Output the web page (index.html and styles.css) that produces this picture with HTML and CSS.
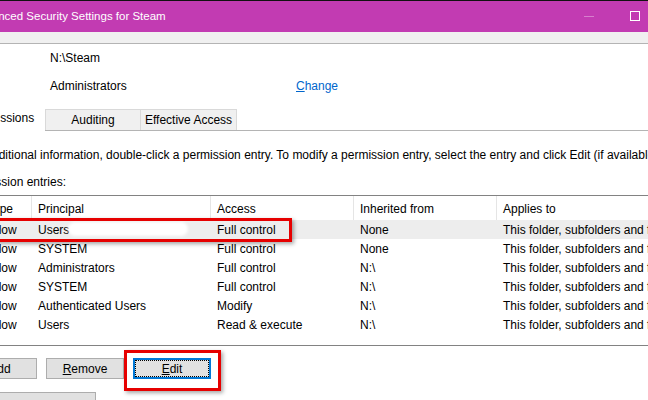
FILE: index.html
```html
<!DOCTYPE html>
<html>
<head>
<meta charset="utf-8">
<title>Advanced Security Settings for Steam</title>
<link rel="stylesheet" href="styles.css">
</head>
<body>
<div class="window">
  <div class="titlebar">
    <span class="title">Advanced Security Settings for Steam</span>
    <div class="controls">
      <span class="ctl"><span class="min-glyph"></span></span>
      <span class="ctl"><span class="max-glyph"></span></span>
      <span class="ctl">
        <svg class="close-glyph" width="10" height="10" viewBox="0 0 10 10"><path d="M0 0L10 10M10 0L0 10" stroke="#fff" stroke-width="1"/></svg>
      </span>
    </div>
  </div>
  <div class="band"></div>

  <div class="content">
    <div class="info">
      <span class="val">N:\Steam</span><span></span>
      <span class="val">Administrators</span><a class="link"><u>C</u>hange</a>
    </div>

    <div class="tabs">
      <div class="tab active tab-perm">Permissions</div>
      <div class="tab tab-aud">Auditing</div>
      <div class="tab tab-eff">Effective Access</div>
    </div>

    <p class="note">For additional information, double-click a permission entry. To modify a permission entry, select the entry and click Edit (if available).</p>
    <p class="caption">Permission entries:</p>

    <div class="list">
      <div class="row head">
        <span class="c1">Type</span><span>Principal</span><span>Access</span><span>Inherited from</span><span>Applies to</span>
      </div>
      <div class="row sel">
        <span class="c1">Allow</span><span>Users</span><span>Full control</span><span>None</span><span>This folder, subfolders and files</span>
      </div>
      <div class="row">
        <span class="c1">Allow</span><span>SYSTEM</span><span>Full control</span><span>None</span><span>This folder, subfolders and files</span>
      </div>
      <div class="row">
        <span class="c1">Allow</span><span>Administrators</span><span>Full control</span><span>N:\</span><span>This folder, subfolders and files</span>
      </div>
      <div class="row">
        <span class="c1">Allow</span><span>SYSTEM</span><span>Full control</span><span>N:\</span><span>This folder, subfolders and files</span>
      </div>
      <div class="row">
        <span class="c1">Allow</span><span>Authenticated Users</span><span>Modify</span><span>N:\</span><span>This folder, subfolders and files</span>
      </div>
      <div class="row">
        <span class="c1">Allow</span><span>Users</span><span>Read &amp; execute</span><span>N:\</span><span>This folder, subfolders and files</span>
      </div>
      <div class="blur-blob"></div>
      <div class="redbox redbox-row"></div>
    </div>

    <div class="buttons">
      <button class="btn btn-add"><u>A</u>dd</button>
      <button class="btn"><u>R</u>emove</button>
      <button class="btn focused"><u>E</u>dit</button>
      <div class="redbox redbox-btn"></div>
    </div>

    <div class="buttons2">
      <button class="btn wide">Disable inheritance</button>
    </div>
  </div>
</div>
</body>
</html>
```
FILE: styles.css
```css
html, body {
  margin: 0;
  padding: 0;
  overflow: hidden;
}
body {
  width: 648px;
  height: 400px;
  background: #fff;
  font-family: "Liberation Sans", Arial, sans-serif;
  font-size: 12px;
  color: #000;
}

.window {
  width: 752px;
  margin-left: -48px;
}

/* title bar */
.titlebar {
  display: flex;
  align-items: center;
  height: 31px;
  border-top: 1px solid #111;
  background: #C23BB2;
  color: #fff;
}
.title {
  flex: 1;
  padding-left: 20px;
  font-size: 11.5px;
  line-height: 16px;
  padding-bottom: 1px;
}
.controls {
  display: flex;
  height: 31px;
}
.ctl {
  width: 46px;
  display: flex;
  align-items: center;
  justify-content: center;
}
.min-glyph {
  width: 10px;
  height: 1px;
  background: rgba(255, 255, 255, 0.35);
}
.max-glyph {
  width: 10px;
  height: 10px;
  box-sizing: border-box;
  border: 1px solid #fff;
  margin-top: -1px;
}

.band {
  height: 11px;
  background: #F0F0F0;
  border-bottom: 1px solid #B4B4B4;
}

/* owner info */
.info {
  display: grid;
  grid-template-columns: 246px auto;
  row-gap: 12px;
  padding: 6px 0 0 98px;
  line-height: 16px;
}
.link {
  color: #0066CC;
  justify-self: start;
}

/* tabs */
.tabs {
  display: flex;
  align-items: flex-end;
  margin-top: 15px;
  padding-left: 6px;
  height: 21px;
  border-bottom: 1px solid #B4B4B4;
}
.tab {
  box-sizing: border-box;
  height: 21px;
  line-height: 20px;
  text-align: center;
  background: #F0F0F0;
  border-top: 1px solid #D9D9D9;
  border-left: 1px solid #D9D9D9;
}
.tab.active {
  background: #fff;
  border: none;
  height: 24px;
  line-height: 22px;
  margin-bottom: -1px;
}
.tab-perm { width: 87px; }
.tab-aud { width: 95px; }
.tab-eff { width: 97px; border-right: 1px solid #D9D9D9; }

.note {
  margin: 16px 0 0 12px;
  line-height: 16px;
  white-space: nowrap;
}
.caption {
  margin: 11px 0 0 12px;
  line-height: 16px;
}

/* list view */
.list {
  position: relative;
  margin: 5px 12px 0 12px;
  height: 149px;
  border-top: 1px solid #828282;
  border-bottom: 1px solid #828282;
}
.row {
  display: grid;
  grid-template-columns: 68px 179px 143px 143px 1fr;
  height: 19px;
  line-height: 18px;
  white-space: nowrap;
}
.row > span {
  padding-left: 6px;
  padding-top: 1px;
  overflow: hidden;
}
.row > span.c1 {
  padding-left: 24px;
}
.row.head {
  height: 24px;
  line-height: 22px;
}
.row.head > span {
  padding-top: 2px;
  border-right: 1px solid #E5E5E5;
}
.row.head > span:first-child {
  padding-left: 23px;
}
.row.sel {
  background: #EDEDED;
}

.blur-blob {
  position: absolute;
  left: 104px;
  top: 26px;
  width: 120px;
  height: 14px;
  border-radius: 8px;
  background: #fff;
  filter: blur(1.5px);
}

.redbox {
  position: absolute;
  box-sizing: border-box;
  border: 3px solid #E60000;
  box-shadow: 2px 2px 4px rgba(0, 0, 0, 0.35);
}
.redbox-row {
  left: 20px;
  top: 22px;
  width: 308px;
  height: 24px;
}

/* buttons */
.buttons {
  position: relative;
  display: flex;
  gap: 9px;
  margin-top: 12px;
  padding-left: 7px;
}
.btn {
  box-sizing: border-box;
  width: 78px;
  height: 21px;
  padding: 0;
  margin: 0;
  background: #E1E1E1;
  border: 1px solid #ADADAD;
  font-family: "Liberation Sans", Arial, sans-serif;
  font-size: 12px;
  color: #000;
  line-height: 18px;
}
.btn-add {
  padding-left: 4px;
}
.btn.focused {
  border: 2px solid #0078D7;
  outline: 1px dotted #000;
  outline-offset: -3px;
  line-height: 16px;
}
.redbox-btn {
  left: 172px;
  top: -8px;
  width: 97px;
  height: 41px;
}

.buttons2 {
  margin-top: 13px;
  padding-left: 12px;
}
.btn.wide {
  width: 132px;
  height: 30px;
  padding-top: 6px;
}
```
